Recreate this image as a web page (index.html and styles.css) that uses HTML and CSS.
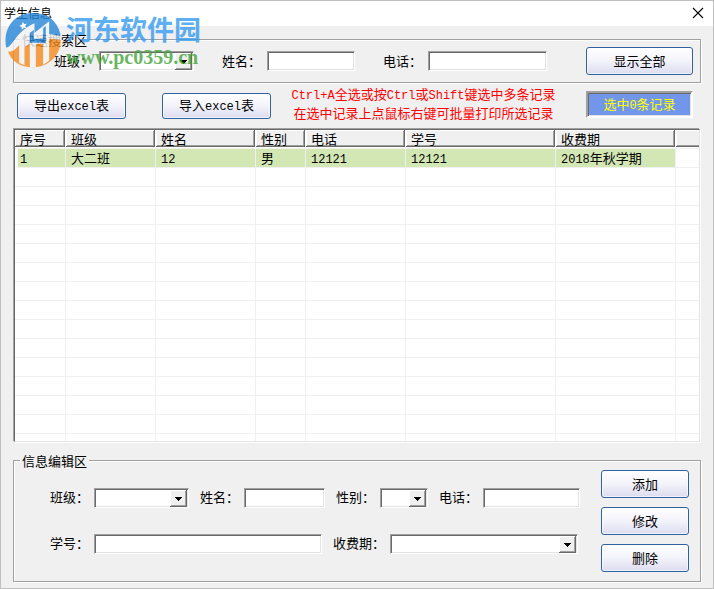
FILE: index.html
```html
<!DOCTYPE html>
<html lang="zh-CN">
<head>
<meta charset="utf-8">
<title>学生信息</title>
<link rel="stylesheet" href="styles.css">
</head>
<body>
<div class="window">
  <header class="titlebar">
    <h1 class="title">学生信息</h1>
    <button class="close" type="button" aria-label="关闭">
      <svg width="12" height="12" viewBox="0 0 12 12"><path d="M1 1 11 11M11 1 1 11" stroke="#000" stroke-width="1.1" fill="none"/></svg>
    </button>
  </header>

  <main class="content">
    <fieldset class="group search">
      <legend>快速搜索区</legend>
      <div class="search-row">
        <label for="s-class">班级：</label>
        <span class="combo w-class"><select id="s-class"><option></option></select></span>
        <label for="s-name">姓名：</label>
        <input class="field w-sname" id="s-name" type="text">
        <label for="s-phone">电话：</label>
        <input class="field w-sphone" id="s-phone" type="text">
        <button class="btn show-all" type="button">显示全部</button>
      </div>
    </fieldset>

    <div class="toolbar">
      <button class="btn export" type="button">导出<span class="mono">excel</span>表</button>
      <button class="btn export" type="button">导入<span class="mono">excel</span>表</button>
      <p class="hint"><span class="mono">Ctrl+A</span>全选或按<span class="mono">Ctrl</span>或<span class="mono">Shift</span>键选中多条记录<br>在选中记录上点鼠标右键可批量打印所选记录</p>
      <output class="count">选中<span class="mono">0</span>条记录</output>
    </div>

    <div class="list">
      <table>
        <colgroup><col class="c-no"><col class="c-class"><col class="c-name"><col class="c-sex"><col class="c-phone"><col class="c-id"><col class="c-term"><col></colgroup>
        <thead>
          <tr><th><div>序号</div></th><th><div>班级</div></th><th><div>姓名</div></th><th><div>性别</div></th><th><div>电话</div></th><th><div>学号</div></th><th><div>收费期</div></th><th><div></div></th></tr>
        </thead>
        <tbody>
          <tr class="selected"><td><span class="mono">1</span></td><td>大二班</td><td><span class="mono">12</span></td><td>男</td><td><span class="mono">12121</span></td><td><span class="mono">12121</span></td><td><span class="mono">2018</span>年秋学期</td><td></td></tr>
          <tr><td></td><td></td><td></td><td></td><td></td><td></td><td></td><td></td></tr>
          <tr><td></td><td></td><td></td><td></td><td></td><td></td><td></td><td></td></tr>
          <tr><td></td><td></td><td></td><td></td><td></td><td></td><td></td><td></td></tr>
          <tr><td></td><td></td><td></td><td></td><td></td><td></td><td></td><td></td></tr>
          <tr><td></td><td></td><td></td><td></td><td></td><td></td><td></td><td></td></tr>
          <tr><td></td><td></td><td></td><td></td><td></td><td></td><td></td><td></td></tr>
          <tr><td></td><td></td><td></td><td></td><td></td><td></td><td></td><td></td></tr>
          <tr><td></td><td></td><td></td><td></td><td></td><td></td><td></td><td></td></tr>
          <tr><td></td><td></td><td></td><td></td><td></td><td></td><td></td><td></td></tr>
          <tr><td></td><td></td><td></td><td></td><td></td><td></td><td></td><td></td></tr>
          <tr><td></td><td></td><td></td><td></td><td></td><td></td><td></td><td></td></tr>
          <tr><td></td><td></td><td></td><td></td><td></td><td></td><td></td><td></td></tr>
          <tr><td></td><td></td><td></td><td></td><td></td><td></td><td></td><td></td></tr>
          <tr><td></td><td></td><td></td><td></td><td></td><td></td><td></td><td></td></tr>
          <tr><td></td><td></td><td></td><td></td><td></td><td></td><td></td><td></td></tr>
        </tbody>
      </table>
    </div>

    <fieldset class="group edit">
      <legend>信息编辑区</legend>
      <div class="edit-body">
        <div class="edit-fields">
          <div class="edit-row">
            <label for="e-class">班级：</label>
            <span class="combo w-class"><select id="e-class"><option></option></select></span>
            <label for="e-name">姓名：</label>
            <input class="field w-ename" id="e-name" type="text">
            <label for="e-sex">性别：</label>
            <span class="combo w-sex"><select id="e-sex"><option></option></select></span>
            <label for="e-phone">电话：</label>
            <input class="field w-ephone" id="e-phone" type="text">
          </div>
          <div class="edit-row">
            <label for="e-id">学号：</label>
            <input class="field w-id" id="e-id" type="text">
            <label for="e-term">收费期：</label>
            <span class="combo w-term"><select id="e-term"><option></option></select></span>
          </div>
        </div>
        <div class="actions">
          <button class="btn" type="button">添加</button>
          <button class="btn" type="button">修改</button>
          <button class="btn" type="button">删除</button>
        </div>
      </div>
    </fieldset>
  </main>

  <div class="watermark">
    <svg class="mark-logo" width="57" height="56" viewBox="0 0 170 168">
      <path d="M3 108C-8 45 30 3 84 3C128 3 158 28 166 68L150 92H30Q16 112 3 108Z" fill="#2585d8"/>
      <path d="M8 116C30 122 46 84 84 76L150 74L167 76C170 128 132 166 84 166C44 166 16 146 8 116Z" fill="#f68b1f"/>
      <path d="M2 106C22 110 26 62 88 34V62L132 28V66L168 72V84L132 80V146L114 158V96H92V166H74V96L58 106V160L42 152V98C32 110 22 122 6 118Z" fill="#f4f4f4"/>
      <path d="M74 62 86 54V80H114V48L122 42V92H74Z" fill="#2585d8"/>
      <path d="M53 29l4 7 8-1-5 7 4 7-8-2-6 6-1-8-7-4 8-3Z" fill="#fff"/>
    </svg>
    <div class="mark-text">
      <span class="mark-name">河东软件园</span>
      <span class="mark-url">www.pc0359.cn</span>
    </div>
  </div>
</div>
</body>
</html>
```

FILE: styles.css
```css
* { box-sizing: border-box; }

body {
  margin: 0;
  font: 13px/19px "Noto Sans CJK SC", sans-serif;
  color: #000;
}

button, input, select { font: inherit; color: inherit; margin: 0; }

.mono { font: 12px/1 "Liberation Mono", monospace; }

.window {
  position: relative;
  display: flex;
  flex-direction: column;
  height: 100vh;
  min-height: 480px;
  background: #f0f0f0;
  border: 1px solid #c0c0c0;
}

.titlebar {
  display: flex;
  align-items: center;
  justify-content: space-between;
  height: 25px;
  padding: 0 9px 2px 3px;
  background: #fff;
}
.title { margin: 0; font-size: 12px; font-weight: 400; }
.close {
  display: flex;
  padding: 0;
  border: 0;
  background: none;
}

.content {
  flex: 1;
  display: flex;
  flex-direction: column;
  min-height: 0;
  padding: 4px 12px 6px;
}

.group {
  margin: 0;
  padding: 0;
  border: 1px solid #a0a0a0;
  box-shadow: 1px 1px 0 #fff, inset 1px 1px 0 #fff;
}
.group legend {
  margin-left: 6px;
  padding: 0 2px;
  background: #f0f0f0;
}

label { padding-bottom: 2px; white-space: nowrap; }

.field, .combo {
  flex: none;
  height: 20px;
  background: #fff;
  border: 1px solid;
  border-color: #a0a0a0 #fff #fff #a0a0a0;
  box-shadow: inset 1px 1px 0 #696969, inset -1px -1px 0 #e3e3e3;
}
.field { padding: 0 4px; border-radius: 0; }

.combo {
  display: grid;
  grid-template-rows: minmax(0, 1fr);
  padding: 1px 1px 0;
}
.combo select {
  grid-area: 1 / 1;
  min-width: 0;
  width: 100%;
  height: 100%;
  padding: 0 18px 0 2px;
  border: 0;
  border-radius: 0;
  background: none;
  appearance: none;
}
.combo::after {
  content: "";
  grid-area: 1 / 1;
  justify-self: end;
  width: 17px;
  height: 100%;
  background:
    linear-gradient(#000, #000) 5px 7px / 7px 1px no-repeat,
    linear-gradient(#000, #000) 6px 8px / 5px 1px no-repeat,
    linear-gradient(#000, #000) 7px 9px / 3px 1px no-repeat,
    linear-gradient(#000, #000) 8px 10px / 1px 1px no-repeat,
    #f0f0f0;
  box-shadow: inset -1px -1px 0 #696969, inset 1px 1px 0 #fff, inset -2px -2px 0 #a0a0a0;
  pointer-events: none;
}

.btn {
  height: 28px;
  padding: 0 0 2px;
  border: 1px solid #2f62a0;
  border-radius: 3px;
  background: linear-gradient(#fff, #f3f3fb 50%, #dcdcf0);
  box-shadow: inset 0 0 0 1px rgba(255, 255, 255, .6);
}

.search-row {
  display: flex;
  align-items: center;
  padding: 0 7px 7px 40px;
  margin-top: -2px;
}
.search-row .combo, .search-row .field { margin-left: 6px; }
.search-row .combo + label, .search-row .field + label { margin-left: 28px; }
.show-all { width: 107px; margin-left: auto; }

.w-class { width: 95px; }
.w-sname { width: 88px; }
.w-sphone { width: 119px; }
.w-ename { width: 81px; }
.w-sex { width: 48px; }
.w-ephone { width: 97px; }
.w-id { width: 228px; }
.w-term { width: 188px; }

.toolbar {
  display: flex;
  align-items: center;
  height: 45px;
  padding: 0 8px 0 4px;
}
.export { flex: none; width: 109px; height: 26px; }
.export + .export { margin-left: 36px; }
.hint {
  flex: 1;
  margin: 0;
  padding: 0 10px 5px 0;
  text-align: center;
  white-space: nowrap;
  color: #f00;
}
.count {
  width: 107px;
  height: 27px;
  margin-bottom: 2px;
  border: 2px solid;
  border-color: #a0a0a0 #fff #fff #a0a0a0;
  box-shadow: inset 1px 1px 0 #696969, inset -1px -1px 0 #e3e3e3;
  background: #7296ea;
  color: #ff0;
  text-align: center;
  line-height: 21px;
}

.list {
  flex: 1;
  min-height: 0;
  margin: 1px;
  overflow: hidden;
  background: #fff;
  border: 1px solid;
  border-color: #696969 #e3e3e3 #e3e3e3 #696969;
  box-shadow: -1px -1px 0 #a0a0a0, 1px 1px 0 #fff;
}
.list table {
  width: 100%;
  table-layout: fixed;
  border-collapse: separate;
  border-spacing: 0;
}
.c-no { width: 51px; }
.c-class { width: 90px; }
.c-name { width: 100px; }
.c-sex { width: 50px; }
.c-phone { width: 100px; }
.c-id { width: 150px; }
.c-term { width: 120px; }

th {
  padding: 0 1px 1px 0;
  border-bottom: 1px solid #f0f0f0;
  font-weight: 400;
  text-align: left;
}
th div {
  height: 17px;
  padding-left: 5px;
  line-height: 17px;
  background: #f0f0f0;
  box-shadow: inset -1px -1px 0 #696969, inset 1px 1px 0 #fff, inset -2px -2px 0 #a0a0a0;
}
th:last-child { padding-right: 0; }
th:last-child div { box-shadow: inset 0 -1px 0 #696969, inset 1px 1px 0 #fff, inset 0 -2px 0 #a0a0a0; }
td {
  height: 19px;
  padding: 0 0 0 5px;
  line-height: 18px;
  border-right: 1px solid #f0f0f0;
  border-bottom: 1px solid #f0f0f0;
  white-space: nowrap;
}
td:last-child { border-right: 0; }
.selected td:not(:last-child) { background: #d3e7b5; }
.selected td:first-child { border-left: 3px solid #fff; padding-left: 2px; }

.edit { margin-top: 8px; }
.edit-body {
  display: flex;
  justify-content: space-between;
  padding: 0 11px 9px 36px;
}
.edit-fields {
  display: flex;
  flex-direction: column;
  gap: 25px;
  padding-top: 17px;
}
.edit-row { display: flex; align-items: center; }
.edit-row .combo, .edit-row .field { margin-left: 5px; }
.edit-row .combo + label, .edit-row .field + label { margin-left: 11px; }
.actions { display: flex; flex-direction: column; gap: 9px; }
.actions .btn { width: 88px; }

.watermark {
  position: absolute;
  left: 4px;
  top: 11px;
  display: flex;
  gap: 4px;
  opacity: .8;
  pointer-events: none;
}
.mark-text {
  display: flex;
  flex-direction: column;
  white-space: nowrap;
}
.mark-name {
  font-size: 27px;
  font-weight: 700;
  line-height: 33px;
  color: #369bf0;
}
.mark-url {
  font: 700 20px/25px "Liberation Serif", serif;
  color: #43a53c;
}
```
